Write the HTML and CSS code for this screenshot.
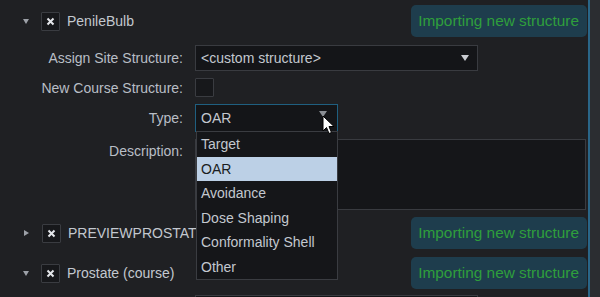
FILE: index.html
```html
<!DOCTYPE html>
<html lang="en">
<head>
    <meta charset="UTF-8">
    <title>Structure Import</title>
    <link rel="stylesheet" href="styles.css">
</head>
<body>
    <div class="window">
        <div class="panel">
            <div class="structure">
                <div class="header">
                    <span class="twisty open"></span>
                    <span class="check"><svg width="9" height="9" viewBox="0 0 9 9"><path d="M1.5 1.5 L7.5 7.5 M7.5 1.5 L1.5 7.5" stroke="#e4e6ea" stroke-width="2"/></svg></span>
                    <span class="name">PenileBulb</span>
                    <span class="status">Importing new structure</span>
                </div>
                <div class="form">
                    <label>Assign Site Structure:</label>
                    <div class="select site"><span>&lt;custom structure&gt;</span><span class="arrow"></span></div>
                    <label>New Course Structure:</label>
                    <div><span class="check"></span></div>
                    <label>Type:</label>
                    <div class="type-field">
                        <div class="select focus"><span>OAR</span><span class="arrow dim"></span></div>
                        <ul class="dropdown">
                            <li>Target</li>
                            <li class="selected">OAR</li>
                            <li>Avoidance</li>
                            <li>Dose Shaping</li>
                            <li>Conformality Shell</li>
                            <li>Other</li>
                        </ul>
                        <svg class="pointer" width="14" height="21" viewBox="0 0 14 21">
                            <path d="M1 1 L1 16 L4.5 12.5 L7 18.5 L9.5 17.5 L7 11.5 L12 11.5 Z" fill="#fff" stroke="#000" stroke-width="1"/>
                        </svg>
                    </div>
                    <label class="top">Description:</label>
                    <div class="textarea"></div>
                </div>
            </div>

            <div class="structure second">
                <div class="header">
                    <span class="twisty closed"></span>
                    <span class="check"><svg width="9" height="9" viewBox="0 0 9 9"><path d="M1.5 1.5 L7.5 7.5 M7.5 1.5 L1.5 7.5" stroke="#e4e6ea" stroke-width="2"/></svg></span>
                    <span class="name">PREVIEWPROSTATE</span>
                    <span class="status">Importing new structure</span>
                </div>
            </div>

            <div class="structure third">
                <div class="header">
                    <span class="twisty open"></span>
                    <span class="check"><svg width="9" height="9" viewBox="0 0 9 9"><path d="M1.5 1.5 L7.5 7.5 M7.5 1.5 L1.5 7.5" stroke="#e4e6ea" stroke-width="2"/></svg></span>
                    <span class="name">Prostate (course)</span>
                    <span class="status">Importing new structure</span>
                </div>
                <div class="form">
                    <label></label>
                    <div class="select site"></div>
                </div>
            </div>
        </div>
        <div class="scrollbar"></div>
    </div>
</body>
</html>
```

FILE: styles.css
```css
body { margin: 0; background: #1f2023; font-family: "Liberation Sans", Arial, sans-serif; font-size: 14px; color: #b9bec6; overflow: hidden; }
.window { display: flex; height: 297px; }
.panel { width: 588px; border-right: 2px solid #2a6688; overflow: hidden; }
.scrollbar { flex: 1; background: #2b2d31; }

.header { display: flex; align-items: center; height: 32px; margin-top: 5px; padding-left: 23px; }
.second .header { margin-top: 7px; }
.third .header { margin-top: 8px; }
.twisty { width: 0; height: 0; margin-right: 12px; }
.twisty.open { border-left: 3.5px solid transparent; border-right: 3.5px solid transparent; border-top: 5px solid #9da1a8; }
.twisty.closed { border-top: 3.5px solid transparent; border-bottom: 3.5px solid transparent; border-left: 5px solid #9da1a8; margin-left: 1px; margin-right: 13px; }
.check { display: flex; align-items: center; justify-content: center; width: 17px; height: 17px; border: 1px solid #3a3c41; background: #17181b; border-radius: 1px; }
.name { margin-left: 7px; color: #c3c8cf; white-space: nowrap; }
.status { margin-left: auto; margin-right: 1px; height: 32px; line-height: 32px; padding: 0 8px 0 7px; background: #1e3d4d; border-radius: 5px; color: #2f9f3c; font-size: 15.4px; white-space: nowrap; }

.form { display: grid; grid-template-columns: 183px 1fr; column-gap: 12px; row-gap: 7px; margin-top: 8px; align-items: center; }
.form label { text-align: right; white-space: nowrap; }
.form label.top { align-self: start; padding-top: 4px; }
.third .form { margin-top: 6px; }

.select { display: flex; align-items: center; justify-content: space-between; box-sizing: border-box; height: 26px; padding: 0 8px 0 5px; border: 1px solid #393b40; background: #141518; color: #c3c8cf; }
.select.site { width: 283px; }
.select.focus { width: 143px; height: 28px; border-color: #1f5f80; }
.arrow { width: 0; height: 0; border-left: 4px solid transparent; border-right: 4px solid transparent; border-top: 6px solid #c9ccd1; }
.arrow.dim { border-top-color: #8a8e94; margin-right: 2px; margin-top: -8px; }

.type-field { position: relative; }
.dropdown { position: absolute; left: 1px; top: 27px; width: 140px; margin: 0; padding: 0; list-style: none; border: 1px solid #3a3c41; background: #151619; z-index: 2; }
.dropdown li { height: 24.5px; line-height: 24.5px; padding-left: 4px; color: #c3c8cf; white-space: nowrap; }
.dropdown li.selected { background: #bcd0e6; color: #1a1c20; }
.pointer { position: absolute; left: 127px; top: 11px; z-index: 3; }

.textarea { width: 391px; height: 71px; box-sizing: border-box; border: 1px solid #393b40; background: #151619; }
```
